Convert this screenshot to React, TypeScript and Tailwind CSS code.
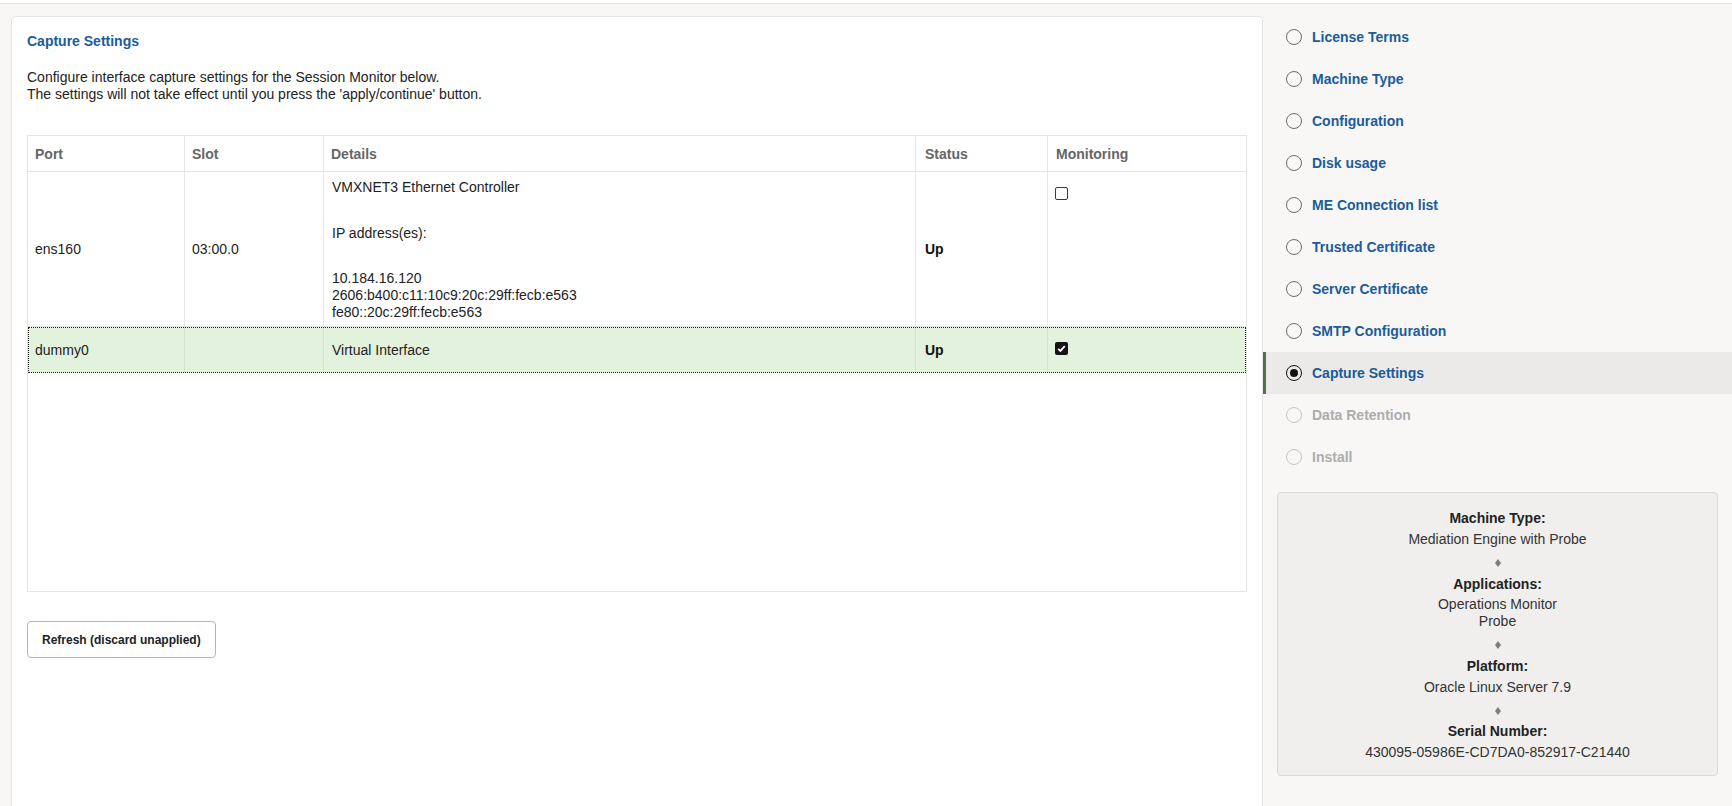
import React from "react";

type Step = { name: string; state: "done" | "active" | "disabled" };

const steps: Step[] = [
  { name: "License Terms", state: "done" },
  { name: "Machine Type", state: "done" },
  { name: "Configuration", state: "done" },
  { name: "Disk usage", state: "done" },
  { name: "ME Connection list", state: "done" },
  { name: "Trusted Certificate", state: "done" },
  { name: "Server Certificate", state: "done" },
  { name: "SMTP Configuration", state: "done" },
  { name: "Capture Settings", state: "active" },
  { name: "Data Retention", state: "disabled" },
  { name: "Install", state: "disabled" },
];

const cols = "grid grid-cols-[157px_139px_592px_132px_1fr]";

const Checkbox = ({ checked }: { checked?: boolean }) =>
  checked ? (
    <div className="w-[13px] h-[13px] rounded-[2px] bg-[#141414] flex items-center justify-center">
      <svg width="13" height="13" viewBox="0 0 13 13">
        <path d="M3.2 6.8 L5.4 8.9 L9.8 4.2" fill="none" stroke="#fff" strokeWidth="1.8" />
      </svg>
    </div>
  ) : (
    <div className="w-[13px] h-[13px] rounded-[2px] border border-[#3a3a3a] bg-white" />
  );

const Diamond = () => (
  <div className="mt-[6px] h-[17px] flex items-center justify-center">
    <svg width="6" height="8" viewBox="0 0 6 8">
      <polygon points="3,0 6,4 3,8 0,4" fill="#7d7d7d" />
    </svg>
  </div>
);

const Radio = ({ state }: { state: Step["state"] }) => {
  if (state === "active")
    return (
      <div className="w-[16px] h-[16px] rounded-full border-[1.5px] border-[#111] flex items-center justify-center shrink-0">
        <div className="w-[8px] h-[8px] rounded-full bg-[#111]" />
      </div>
    );
  return (
    <div
      className={
        state === "disabled"
          ? "w-[16px] h-[16px] rounded-full border-[1.5px] border-[#c4c4c4] shrink-0"
          : "w-[16px] h-[16px] rounded-full border-[1.5px] border-[#6e6e6e] shrink-0"
      }
    />
  );
};

export default function App() {
  return (
    <div className="h-[806px] w-full overflow-hidden bg-[#f8f7f6] font-['Liberation_Sans',Arial,sans-serif] text-[14px] text-[#222]">
      <div className="h-[4px] bg-white border-b border-[#e3e3e3]" />
      <div className="flex">
        {/* main card */}
        <main className="flex-1 ml-[11px] mt-[12px] h-[820px] bg-white border border-[#e5e5e5] rounded-[5px] pl-[15px] pr-[15px] pt-[16px]">
          <h1 className="leading-[17px] font-bold text-[#1a5c9c]">Capture Settings</h1>
          <p className="mt-[19px] leading-[17px]">
            Configure interface capture settings for the Session Monitor below.
            <br />
            The settings will not take effect until you press the 'apply/continue' button.
          </p>

          <div className="mt-[32px] h-[457px] border border-[#e4e4e4]">
            <div className={`${cols} h-[36px] border-b border-[#e4e4e4] font-bold text-[#666]`}>
              {["Port", "Slot", "Details", "Status", "Monitoring"].map((h, i) => (
                <div
                  key={h}
                  className={`flex items-center pt-[2px] ${i === 3 ? "pl-[9px]" : i === 4 ? "pl-[8px]" : "pl-[7px]"} ${i < 4 ? "border-r border-[#e8e8e8]" : ""}`}
                >
                  {h}
                </div>
              ))}
            </div>

            <div className={`${cols} h-[155px] border-b border-[#e4e4e4] leading-[17px]`}>
              <div className="flex items-center pl-[7px] border-r border-[#e8e8e8]">ens160</div>
              <div className="flex items-center pl-[7px] border-r border-[#e8e8e8]">03:00.0</div>
              <div className="pl-[8px] pt-[7px] border-r border-[#e8e8e8]">
                <div>VMXNET3 Ethernet Controller</div>
                <div className="mt-[29px]">IP address(es):</div>
                <div className="mt-[28px]">
                  10.184.16.120
                  <br />
                  2606:b400:c11:10c9:20c:29ff:fecb:e563
                  <br />
                  fe80::20c:29ff:fecb:e563
                </div>
              </div>
              <div className="flex items-center pl-[9px] font-bold text-[#111] border-r border-[#e8e8e8]">Up</div>
              <div className="pl-[7px] pt-[15px]">
                <Checkbox />
              </div>
            </div>

            <div
              className={`${cols} h-[46px] bg-[#e2f2dc] outline-1 outline-dotted outline-[#222] outline-offset-[-1px]`}
            >
              <div className="flex items-center pl-[7px] border-r border-[#d3e2cc]">dummy0</div>
              <div className="border-r border-[#d3e2cc]" />
              <div className="flex items-center pl-[8px] border-r border-[#d3e2cc]">Virtual Interface</div>
              <div className="flex items-center pl-[9px] font-bold text-[#111] border-r border-[#d3e2cc]">Up</div>
              <div className="flex items-center pl-[7px] pb-[3px]">
                <Checkbox checked />
              </div>
            </div>
          </div>

          <button className="mt-[29px] h-[37px] px-[14px] border border-[#b5b5b5] rounded-[4px] bg-white text-[12px] font-bold text-[#222]">
            Refresh (discard unapplied)
          </button>
        </main>

        {/* sidebar */}
        <aside className="w-[469px] shrink-0 pt-[12px]">
          <nav>
            {steps.map((s) => (
              <div
                key={s.name}
                className={
                  s.state === "active"
                    ? "h-[42px] flex items-center pl-[20px] border-l-[3px] border-[#56704d] bg-[#ebeae8]"
                    : "h-[42px] flex items-center pl-[20px] border-l-[3px] border-transparent"
                }
              >
                <Radio state={s.state} />
                <span
                  className={
                    s.state === "disabled"
                      ? "ml-[10px] font-bold text-[#adadad]"
                      : "ml-[10px] font-bold text-[#1a5c9c]"
                  }
                >
                  {s.name}
                </span>
              </div>
            ))}
          </nav>

          <div className="mt-[14px] mx-[14px] bg-[#f0efee] border border-[#d9d9d9] rounded-[4px] pt-[17px] pb-[14px] text-center leading-[17px]">
            <div className="font-bold text-[#222]">Machine Type:</div>
            <div className="mt-[4px] text-[#333]">Mediation Engine with Probe</div>
            <Diamond />
            <div className="mt-[5px] font-bold text-[#222]">Applications:</div>
            <div className="mt-[3px] text-[#333]">Operations Monitor</div>
            <div className="text-[#333]">Probe</div>
            <Diamond />
            <div className="mt-[5px] font-bold text-[#222]">Platform:</div>
            <div className="mt-[4px] text-[#333]">Oracle Linux Server 7.9</div>
            <Diamond />
            <div className="mt-[4px] font-bold text-[#222]">Serial Number:</div>
            <div className="mt-[4px] text-[#333]">430095-05986E-CD7DA0-852917-C21440</div>
          </div>
        </aside>
      </div>
    </div>
  );
}
